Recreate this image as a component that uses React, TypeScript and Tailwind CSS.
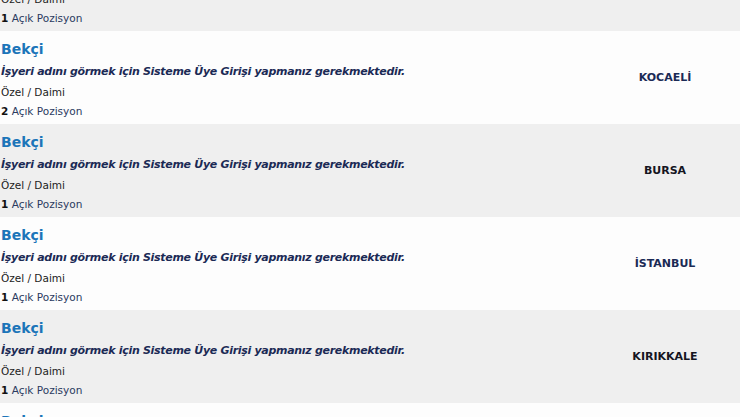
const jobs = [
  { title: "Bekçi", city: "", count: 1, shade: true },
  { title: "Bekçi", city: "KOCAELİ", count: 2, shade: false },
  { title: "Bekçi", city: "BURSA", count: 1, shade: true },
  { title: "Bekçi", city: "İSTANBUL", count: 1, shade: false },
  { title: "Bekçi", city: "KIRIKKALE", count: 1, shade: true },
  { title: "Bekçi", city: "ANKARA", count: 1, shade: false },
];

function JobRow({ job }: { job: (typeof jobs)[number] }) {
  return (
    <div
      className={`flex h-[93px] ${job.shade ? "bg-[#efefef]" : "bg-[#fdfdfd]"}`}
    >
      <div className="flex-1 pl-[1px] pt-[8px]">
        <div className="h-[24px] text-[14px] font-bold leading-[20px] text-[#1c75b9]">
          {job.title}
        </div>
        <div className="h-[21px] text-[11px] font-bold italic leading-[17px] tracking-[-0.3px] text-[#1b2a55]">
          İşyeri adını görmek için Sisteme Üye Girişi yapmanız gerekmektedir.
        </div>
        <div className="h-[19px] text-[10.5px] leading-[17px] text-[#222]">
          Özel / Daimi
        </div>
        <div className="text-[10.5px] leading-[17px] text-[#333]">
          <span className="font-bold text-[#111]">{job.count}</span>{" "}
          <span className="text-[#2a3a60]">Açık Pozisyon</span>
        </div>
      </div>
      <div
        className={`flex w-[150px] items-center justify-center pt-[2px] text-[11px] font-bold ${
          job.shade ? "text-[#15151f]" : "text-[#1b2a55]"
        }`}
      >
        {job.city}
      </div>
    </div>
  );
}

export default function App() {
  return (
    <div
      className="h-[417px] w-[740px] overflow-hidden bg-white"
      style={{ fontFamily: '"DejaVu Sans", Verdana, sans-serif' }}
    >
      <div className="mt-[-62px]">
        {jobs.map((job, i) => (
          <JobRow key={i} job={job} />
        ))}
      </div>
    </div>
  );
}
